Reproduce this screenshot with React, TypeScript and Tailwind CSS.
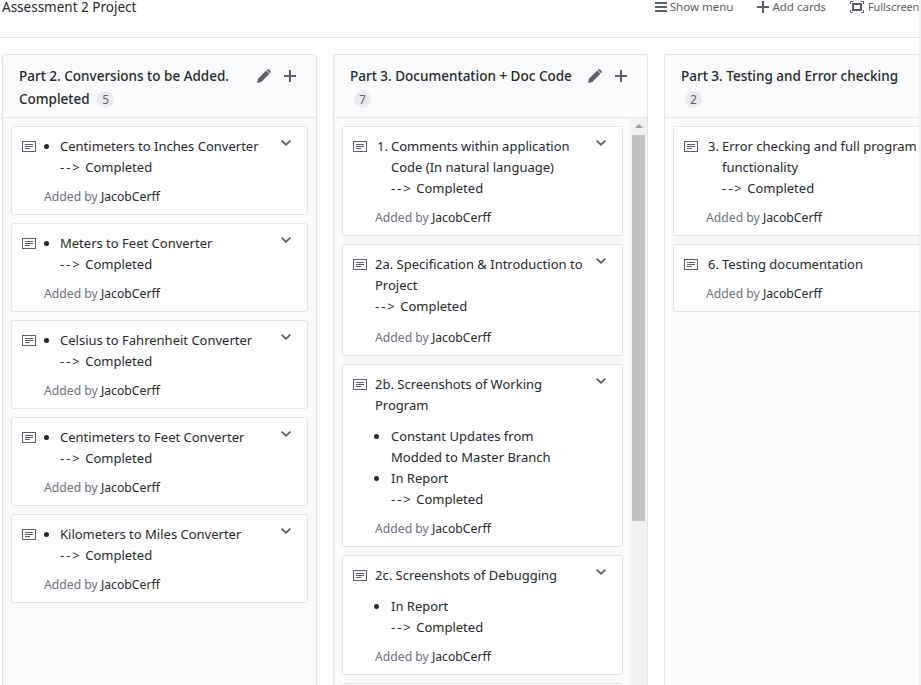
import React from 'react';

function NoteIcon() {
  return (
    <svg width="14" height="12" viewBox="0 0 14 12" className="shrink-0 text-[#586069]" fill="none" stroke="currentColor">
      <rect x="0.5" y="0.5" width="13" height="10" />
      <path d="M3 3.500h8M3 5.500h8M3 7.500h5" />
    </svg>
  );
}

function Chevron() {
  return (
    <svg width="10" height="6" viewBox="0 0 10 6" className="text-[#586069]" fill="currentColor">
      <path d="M5 6 0 1.200 1.200 0 5 3.600 8.800 0 10 1.200z" />
    </svg>
  );
}

function Pencil() {
  return (
    <svg width="14" height="14" viewBox="0 0 14 14" fill="#586069">
      <path d="M0 14l1-4.200L9.200 1.600l3.200 3.200L4.200 13zM10.200.6c.6-.6 1.300-.6 1.900 0l1.300 1.300c.6.6.6 1.300 0 1.900l-.4.4-3.200-3.200z" />
    </svg>
  );
}

function Plus({ size = 12 }: { size?: number }) {
  return (
    <svg width={size} height={size} viewBox="0 0 12 12" fill="#586069">
      <path d="M5 0h2v5h5v2H7v5H5V7H0V5h5z" />
    </svg>
  );
}

function Done() {
  return (
    <>
      <span className="tracking-[2px]">--&gt;</span> Completed
    </>
  );
}

function NoteCard({ bullet, title, children, footGap = 'mt-[9px]' }: { bullet?: boolean; title: React.ReactNode; children?: React.ReactNode; footGap?: string }) {
  return (
    <div className="relative mb-2 shrink-0 rounded-[3px] border border-[#e1e4e8] bg-white pt-[9px] pb-[7px] pl-[10px] pr-[20px]">
      <div className="absolute right-[16px] top-[13px]">
        <Chevron />
      </div>
      <div className="flex">
        <div className="w-[22px] shrink-0 pt-[5px]">
          <NoteIcon />
        </div>
        {bullet ? (
          <div className="flex">
            <span className="w-[16px] pt-[8px]">
              <span className="block h-[5px] w-[5px] rounded-full bg-[#24292e]" />
            </span>
            <div className="text-[#24292e]">{title}</div>
          </div>
        ) : (
          <div className="text-[#24292e]">{title}</div>
        )}
      </div>
      {children}
      <div className={`${footGap} pl-[22px] text-[12.2px] leading-[20px] text-[#6a737d]`}>
        Added by <span className="text-[#24292e]">JacobCerff</span>
      </div>
    </div>
  );
}

function Bullets({ items }: { items: React.ReactNode[] }) {
  return (
    <div className="mt-[10px] pl-[21px] text-[#24292e]">
      {items.map((item, i) => (
        <div key={i} className="flex">
          <span className="w-[17px] shrink-0 pt-[8px]">
            <span className="block h-[5px] w-[5px] rounded-full bg-[#24292e]" />
          </span>
          <div>{item}</div>
        </div>
      ))}
    </div>
  );
}

function Numbered({ n, children }: { n: string; children: React.ReactNode }) {
  return (
    <div className="flex whitespace-nowrap">
      <span className="w-[16px] shrink-0 pl-[2px]">{n}</span>
      <span>{children}</span>
    </div>
  );
}

function Count({ n, className = '' }: { n: number; className?: string }) {
  return (
    <span className={`inline-block h-[17px] w-[17px] rounded-full bg-[#e9ebee] text-center text-[12px] leading-[17px] font-normal text-[#586069] ${className}`}>{n}</span>
  );
}

function ColumnHead({ title, count, actions = true, block }: { title: string; count: number; actions?: boolean; block?: boolean }) {
  return (
    <div className="relative h-[63px] shrink-0 border-b border-[#e1e4e8] pl-4 pr-[80px] pt-[10px] text-[13.5px] font-medium leading-[23px] text-[#24292e]">
      {block ? (
        <>
          <div className="whitespace-nowrap">{title}</div>
          <Count n={count} className="ml-[4px]" />
        </>
      ) : (
        <>
          <span>{title}</span> <Count n={count} className="ml-1" />
        </>
      )}
      {actions && (
        <div className="absolute right-[20px] top-[14px] flex items-center gap-[13px]">
          <Pencil />
          <Plus />
        </div>
      )}
    </div>
  );
}

const converters = [
  'Centimeters to Inches Converter',
  'Meters to Feet Converter',
  'Celsius to Fahrenheit Converter',
  'Centimeters to Feet Converter',
  'Kilometers to Miles Converter',
];

export default function App() {
  return (
    <div className="flex h-[685px] w-[921px] overflow-hidden bg-white text-[13px] leading-[21px] text-[#24292e]" style={{ fontFamily: '"Noto Sans", "Open Sans", sans-serif' }}>
      <div className="w-[919px] shrink-0 overflow-hidden">
        <header className="flex h-[38px] items-start justify-between border-b border-[#e1e4e8] pl-[2px]">
          <div className="text-[13.5px] leading-[14px] text-[#24292e]">Assessment 2 Project</div>
          <div className="flex gap-[24px] text-[11.5px] leading-[14px] text-[#586069] whitespace-nowrap">
            <span className="flex items-center gap-[3px]"><svg width="12" height="10" viewBox="0 0 12 10" fill="#586069"><path d="M0 0h12v2H0zM0 4h12v2H0zM0 8h12v2H0z" /></svg>Show menu</span>
            <span className="flex items-center gap-[3px]"><Plus />Add cards</span>
            <span className="flex w-[69px] items-center gap-[4px] text-[10.8px]"><svg width="14" height="12" viewBox="0 0 14 12" fill="none" stroke="#586069" className="shrink-0"><path d="M.5 3V.5H3M11 .5h2.500V3M13.500 9v2.500H11M3 11.500H.5V9" /><rect x="3" y="3" width="8" height="6" strokeWidth="2" /></svg>Fullscreen</span>
          </div>
        </header>
        <main className="flex items-stretch gap-4 pl-[2px] pt-4">
          <section className="flex h-[640px] w-[315px] shrink-0 flex-col rounded-t-[3px] border border-[#e1e4e8] bg-[#f9fafc]">
            <ColumnHead title="Part 2. Conversions to be Added. Completed" count={5} />
            <div className="px-2 pt-2">
              {converters.map((name) => (
                <NoteCard key={name} bullet title={<>{name}<br /><Done /></>} />
              ))}
            </div>
          </section>

          <section className="flex h-[640px] w-[315px] shrink-0 flex-col rounded-t-[3px] border border-[#e1e4e8] bg-[#f9fafc]">
            <ColumnHead title="Part 3. Documentation + Doc Code" count={7} block />
            <div className="flex min-h-0 flex-1">
              <div className="w-[296px] shrink-0 overflow-hidden pl-2 pr-[7px] pt-2">
                <NoteCard title={<Numbered n="1.">Comments within application<br />Code (In natural language)<br /><Done /></Numbered>} />
                <NoteCard footGap="mt-[11px]" title={<>2a. Specification &amp; Introduction to<br />Project<br /><Done /></>} />
                <NoteCard title={<>2b. Screenshots of Working<br />Program</>}>
                  <Bullets items={[<>Constant Updates from<br />Modded to Master Branch</>, <>In Report<br /><Done /></>]} />
                </NoteCard>
                <NoteCard title="2c. Screenshots of Debugging">
                  <Bullets items={[<>In Report<br /><Done /></>]} />
                </NoteCard>
                <div className="h-10 rounded-[3px] border border-[#e1e4e8] bg-white" />
              </div>
              <div className="flex w-[17px] shrink-0 flex-col items-center bg-[#f1f1f1] pt-[6px]">
                <span className="h-0 w-0 border-x-[4px] border-b-[4px] border-x-transparent border-b-[#a3a3a3]" />
                <span className="mt-[7px] h-[386px] w-[13px] bg-[#c1c1c1]" />
              </div>
            </div>
          </section>

          <section className="flex h-[640px] w-[315px] shrink-0 flex-col rounded-t-[3px] border border-[#e1e4e8] bg-[#f9fafc]">
            <ColumnHead title="Part 3. Testing and Error checking" count={2} block actions={false} />
            <div className="px-2 pt-2">
              <NoteCard title={<Numbered n="3.">Error checking and full program<br />functionality<br /><Done /></Numbered>} />
              <NoteCard title={<Numbered n="6.">Testing documentation</Numbered>} />
            </div>
          </section>
        </main>
      </div>
      <div className="w-[2px] shrink-0 bg-[#f1f1f1]" />
    </div>
  );
}
